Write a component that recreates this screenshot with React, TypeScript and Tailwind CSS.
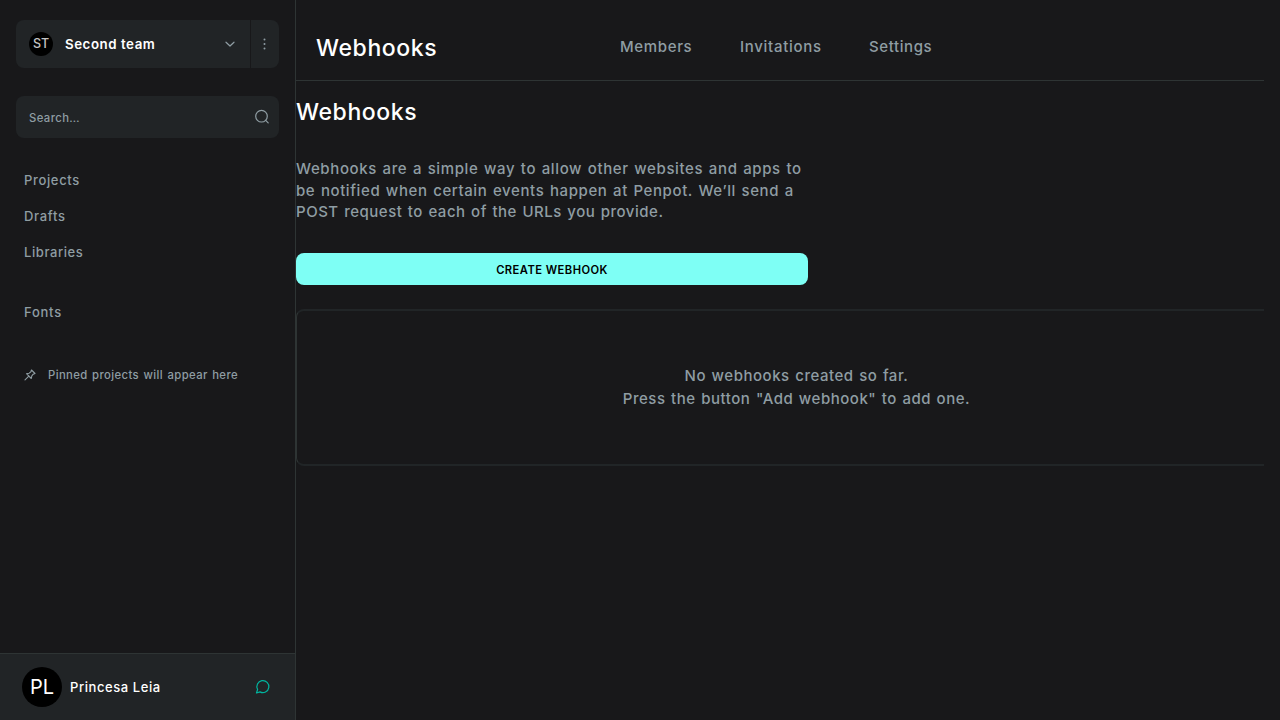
import React from "react";

const navClass = "flex h-9 items-center text-[13px] font-medium";

function TeamSwitcher() {
  return (
    <div className="flex h-12 overflow-hidden rounded-lg bg-[#212426]">
      <button className="flex flex-1 items-center pl-[13px] pr-[14px]">
        <span className="flex size-6 items-center justify-center rounded-full bg-black text-[12.5px] font-medium text-[#c4c4c4]">ST</span>
        <span className="ml-3 pt-0.5 text-[13.3px] font-semibold tracking-[0.55px] text-white">Second team</span>
        <svg className="ml-auto" width="12" height="12" viewBox="0 0 12 12" fill="none" stroke="#8f9da3" strokeWidth="1.2">
          <path d="M2 4.2 6 8 10 4.2" strokeLinecap="round" strokeLinejoin="round" />
        </svg>
      </button>
      <button className="flex w-[29px] items-center justify-center border-l border-[#18181a]">
        <svg width="12" height="12" viewBox="0 0 12 12" fill="#8f9da3">
          <circle cx="5.5" cy="1.5" r="1" />
          <circle cx="5.5" cy="6" r="1" />
          <circle cx="5.5" cy="10.5" r="1" />
        </svg>
      </button>
    </div>
  );
}

function Sidebar() {
  return (
    <aside className="flex w-[296px] shrink-0 flex-col border-r border-[#2e3434]">
      <div className="flex flex-col gap-7 pl-4 pr-4 pt-5">
        <TeamSwitcher />
        <div className="flex h-[42px] items-center justify-between rounded-lg bg-[#212426] pl-[13px] pr-[9px]">
          <span className="pt-0.5 text-[11.3px] font-medium tracking-[0.4px]">Search…</span>
          <svg width="16" height="16" viewBox="0 0 16 16" fill="none" stroke="#8f9da3" strokeWidth="1.2">
            <circle cx="7.5" cy="7.2" r="5.8" />
            <path d="m11.7 11.4 2.5 2.5" strokeLinecap="round" />
          </svg>
        </div>
      </div>
      <nav className="flex flex-col pl-6 pt-[25px]">
        <a className={navClass + " tracking-[0.65px]"}>Projects</a>
        <a className={navClass + " tracking-[0.7px]"}>Drafts</a>
        <a className={navClass + " tracking-[0.58px]"}>Libraries</a>
        <a className={navClass + " mt-6 tracking-[0.75px]"}>Fonts</a>
      </nav>
      <div className="mt-[34px] flex h-5 items-center gap-3 pl-6 text-[11.3px] font-medium tracking-[0.4px] [word-spacing:1px]">
        <svg width="12" height="12" viewBox="0 0 12 12" fill="none" stroke="#8f9da3" strokeWidth="1.1" strokeLinecap="round" strokeLinejoin="round">
          <path d="M7.5 1 11 4.5 9.2 5.2 7.8 6.8 7.3 9.5 2.5 4.7 5.2 4.2 6.8 2.8zM4.8 7.2 1 10.8" />
        </svg>
        <span>Pinned projects will appear here</span>
      </div>
      <footer className="mt-auto flex h-[67px] items-center border-t border-[#2e3434] bg-[#212426] pl-[22px] pr-6">
        <span className="flex size-10 items-center justify-center rounded-full bg-black text-[20px] text-white">PL</span>
        <span className="ml-2 pt-0.5 text-[13px] font-medium tracking-[0.58px] text-white">Princesa Leia</span>
        <svg className="ml-auto" width="16" height="16" viewBox="0 0 16 16" fill="none" stroke="#00b59f" strokeWidth="1.2" strokeLinecap="round" strokeLinejoin="round">
          <path d="M1.5 14l1.1-3.5A6 6 0 1 1 5 12.9z" />
        </svg>
      </footer>
    </aside>
  );
}

export default function App() {
  return (
    <div className="flex h-screen w-screen overflow-hidden bg-[#18181a] font-['Inter',sans-serif] text-[#8f9da3]">
      <Sidebar />
      <main className="mr-4 flex min-w-0 flex-1 flex-col overflow-hidden">
        <header className="flex h-[81px] shrink-0 border-b border-[#2e3434] pl-5">
          <h1 className="mt-8 w-[304px] text-[23px] font-[450] leading-8 tracking-[0.6px] text-white">Webhooks</h1>
          <nav className="mt-9 flex text-[15px] font-medium leading-[22px] tracking-[0.6px]">
            <a className="w-[120px] tracking-[0.65px]">Members</a>
            <a className="w-[129px] tracking-[0.7px]">Invitations</a>
            <a>Settings</a>
          </nav>
        </header>
        <section className="flex w-[512px] flex-col">
          <h2 className="mt-[15px] text-[23px] font-[450] leading-8 tracking-[0.6px] text-white">Webhooks</h2>
          <p className="mt-[30px] whitespace-nowrap text-[15px] font-medium leading-[21.5px] [word-spacing:1px]">
            <span className="tracking-[0.62px]">Webhooks are a simple way to allow other websites and apps to</span>
            <br />
            <span className="tracking-[0.6px]">be notified when certain events happen at Penpot. We’ll send a</span>
            <br />
            <span className="tracking-[0.51px]">POST request to each of the URLs you provide.</span>
          </p>
          <button className="mt-[30.5px] h-8 rounded-lg bg-[#7efff5] pt-0.5 text-[11.2px] font-semibold tracking-[0.45px] text-black">CREATE WEBHOOK</button>
        </section>
        <section className="mt-6 flex h-[157px] w-[1000px] flex-col items-center justify-center rounded-lg border-y-2 border-l border-y-[#212527] border-l-[#2e3434] pb-px text-[15px] font-medium leading-[23px] tracking-[0.53px] [word-spacing:1px]">
          <p>No webhooks created so far.</p>
          <p>Press the button "Add webhook" to add one.</p>
        </section>
      </main>
    </div>
  );
}
